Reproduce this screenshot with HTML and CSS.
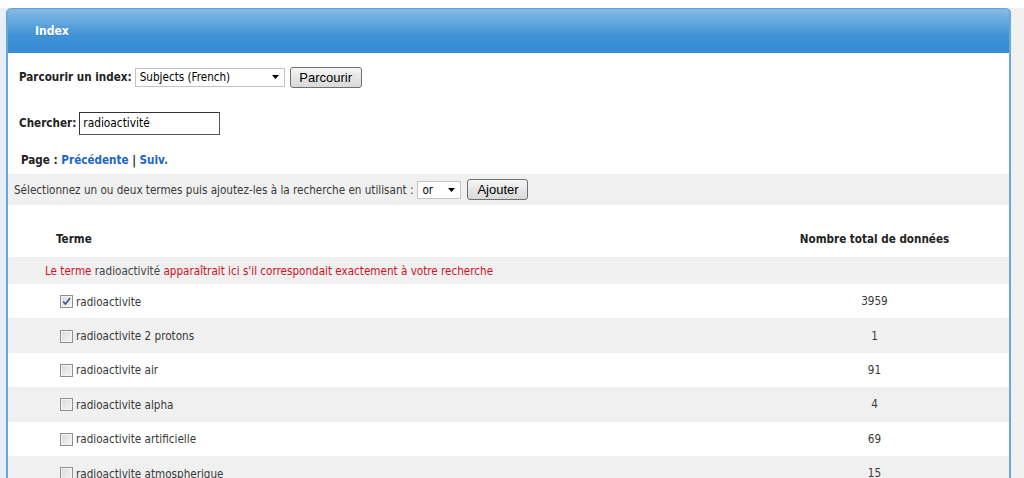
FILE: index.html
```html
<!DOCTYPE html>
<html lang="fr">
<head>
    <meta charset="UTF-8">
    <title>Index</title>
    <link rel="stylesheet" href="styles.css">
</head>
<body>
    <div class="panel">
        <div class="panel-head">Index</div>
        <div class="panel-body">

            <!-- parcourir -->
            <div class="field browse">
                <label>Parcourir un index:</label>
                <div class="select wide">
                    <span>Subjects (French)</span>
                    <svg width="7" height="4" viewBox="0 0 7 4"><path d="M0 0h7L3.5 4z" fill="#000"/></svg>
                </div>
                <button class="btn btn-browse">Parcourir</button>
            </div>

            <!-- chercher -->
            <div class="field search">
                <label>Chercher:</label>
                <input type="text" class="text" value="radioactivité">
            </div>

            <div class="pager">Page : <a href="#">Précédente</a> | <a href="#">Suiv.</a></div>

            <div class="addbar">
                Sélectionnez un ou deux termes puis ajoutez-les à la recherche en utilisant :
                <div class="select small">
                    <span>or</span>
                    <svg width="7" height="4" viewBox="0 0 7 4"><path d="M0 0h7L3.5 4z" fill="#000"/></svg>
                </div>
                <button class="btn btn-add">Ajouter</button>
            </div>

            <!-- liste des termes -->
            <table class="terms">
                <thead>
                    <tr><th class="term">Terme</th><th class="count">Nombre total de données</th></tr>
                </thead>
                <tbody>
                    <tr class="notice"><td colspan="2">Le terme <span class="word">radioactivité</span> apparaîtrait ici s'il correspondait exactement à votre recherche</td></tr>
                    <tr>
                        <td class="term"><label class="item"><span class="cb"><svg width="9" height="9" viewBox="0 0 9 9"><path d="M1.2 4.6l2.3 2.4L8 1.2" fill="none" stroke="#3b5597" stroke-width="1.7"/></svg></span>radioactivite</label></td>
                        <td class="count">3959</td>
                    </tr>
                    <tr>
                        <td class="term"><label class="item"><span class="cb"></span>radioactivite 2 protons</label></td>
                        <td class="count">1</td>
                    </tr>
                    <tr>
                        <td class="term"><label class="item"><span class="cb"></span>radioactivite air</label></td>
                        <td class="count">91</td>
                    </tr>
                    <tr>
                        <td class="term"><label class="item"><span class="cb"></span>radioactivite alpha</label></td>
                        <td class="count">4</td>
                    </tr>
                    <tr>
                        <td class="term"><label class="item"><span class="cb"></span>radioactivite artificielle</label></td>
                        <td class="count">69</td>
                    </tr>
                    <tr>
                        <td class="term"><label class="item"><span class="cb"></span>radioactivite atmospherique</label></td>
                        <td class="count">15</td>
                    </tr>
                </tbody>
            </table>
        </div>
    </div>
</body>
</html>
```

FILE: styles.css
```css
body {
    margin: 0;
    padding: 8px 13px 0 6px;
    background:
        linear-gradient(#fff, #fff) top left / 100% 8px no-repeat,
        linear-gradient(to right, #e7f0f9 6px, #f1f1f1 6px);
    font-family: "DejaVu Sans Condensed", "DejaVu Sans", sans-serif;
    font-stretch: condensed;
    font-size: 11.6px;
    color: #383838;
}
.panel {
    background: #fff;
    border-left: 2px solid #6ba6dc;
    border-right: 2px solid #6ba6dc;
    border-radius: 5px 5px 0 0;
}
.panel-head {
    height: 45px;
    box-sizing: border-box;
    padding-left: 27px;
    line-height: 44px;
    font-weight: bold;
    font-size: 12px;
    color: #fff;
    text-shadow: 0 1px 0 rgba(0, 0, 0, 0.15);
    background: linear-gradient(#86bbe6, #3e91d5 62%, #388cd3);
    border-top: 1px solid #63a1da;
    border-radius: 4px 4px 0 0;
}
.field {
    display: flex;
    align-items: center;
    padding-left: 11px;
}
.field label {
    font-weight: bold;
    color: #222;
    margin-right: 3px;
}
.browse {
    margin-top: 13px;
    height: 22px;
}
.search {
    margin-top: 23px;
    height: 24px;
}
.select {
    display: flex;
    align-items: center;
    justify-content: space-between;
    box-sizing: border-box;
    border: 1px solid #c3c3c3;
    background: #fff;
    color: #000;
    padding: 0 5px 0 4px;
}
.select.wide {
    width: 150px;
    height: 19px;
    margin-right: 5px;
}
.select.small {
    width: 44px;
    height: 18px;
    margin: 0 6px 0 4px;
}
.btn {
    box-sizing: border-box;
    height: 21px;
    padding: 0;
    font-family: "Liberation Sans", Arial, sans-serif;
    font-size: 13px;
    color: #000;
    background: linear-gradient(#f6f6f6, #e6e6e6 50%, #d9d9d9);
    border: 1px solid #707070;
    border-radius: 3px;
}
.btn-browse {
    width: 72px;
}
.btn-add {
    width: 61px;
}
.text {
    box-sizing: border-box;
    width: 141px;
    height: 23px;
    margin: 0;
    padding: 0 3px;
    font-family: inherit;
    font-stretch: condensed;
    font-size: 11.8px;
    color: #000;
    border: 1px solid #555;
    border-top-color: #333;
    border-left-color: #333;
}
.pager {
    margin-top: 17px;
    height: 16px;
    line-height: 16px;
    padding-left: 13px;
    font-weight: bold;
    color: #222;
}
.pager a {
    color: #1a66c8;
    text-decoration: none;
}
.addbar {
    display: flex;
    align-items: center;
    margin-top: 6px;
    height: 31px;
    padding-left: 6px;
    background: #f0f0f0;
}
.terms {
    margin-top: 15px;
    width: 100%;
    border-collapse: collapse;
}
.terms th {
    height: 37px;
    padding: 0;
    font-weight: bold;
    color: #222;
}
.terms th.term {
    text-align: left;
    padding-left: 48px;
}
.terms th.count {
    width: 269px;
    text-align: center;
}
.terms td {
    padding: 0;
    height: 34.4px;
}
.terms tbody tr:nth-child(odd) {
    background: #f0f0f0;
}
.terms .notice td {
    height: 27px;
    padding-left: 37px;
    color: #d0121c;
}
.notice .word {
    color: #444;
}
.terms td.term {
    padding-left: 52px;
}
.terms td.count {
    text-align: center;
}
.item {
    display: flex;
    align-items: center;
    padding-top: 1px;
}
.cb {
    display: flex;
    align-items: center;
    justify-content: center;
    box-sizing: border-box;
    width: 13px;
    height: 13px;
    margin-right: 3px;
    border: 1px solid #8e8f8f;
    background: linear-gradient(135deg, #d9d9d9, #f6f6f6);
    box-shadow: inset 0 0 0 1px #f4f4f4;
}
```
